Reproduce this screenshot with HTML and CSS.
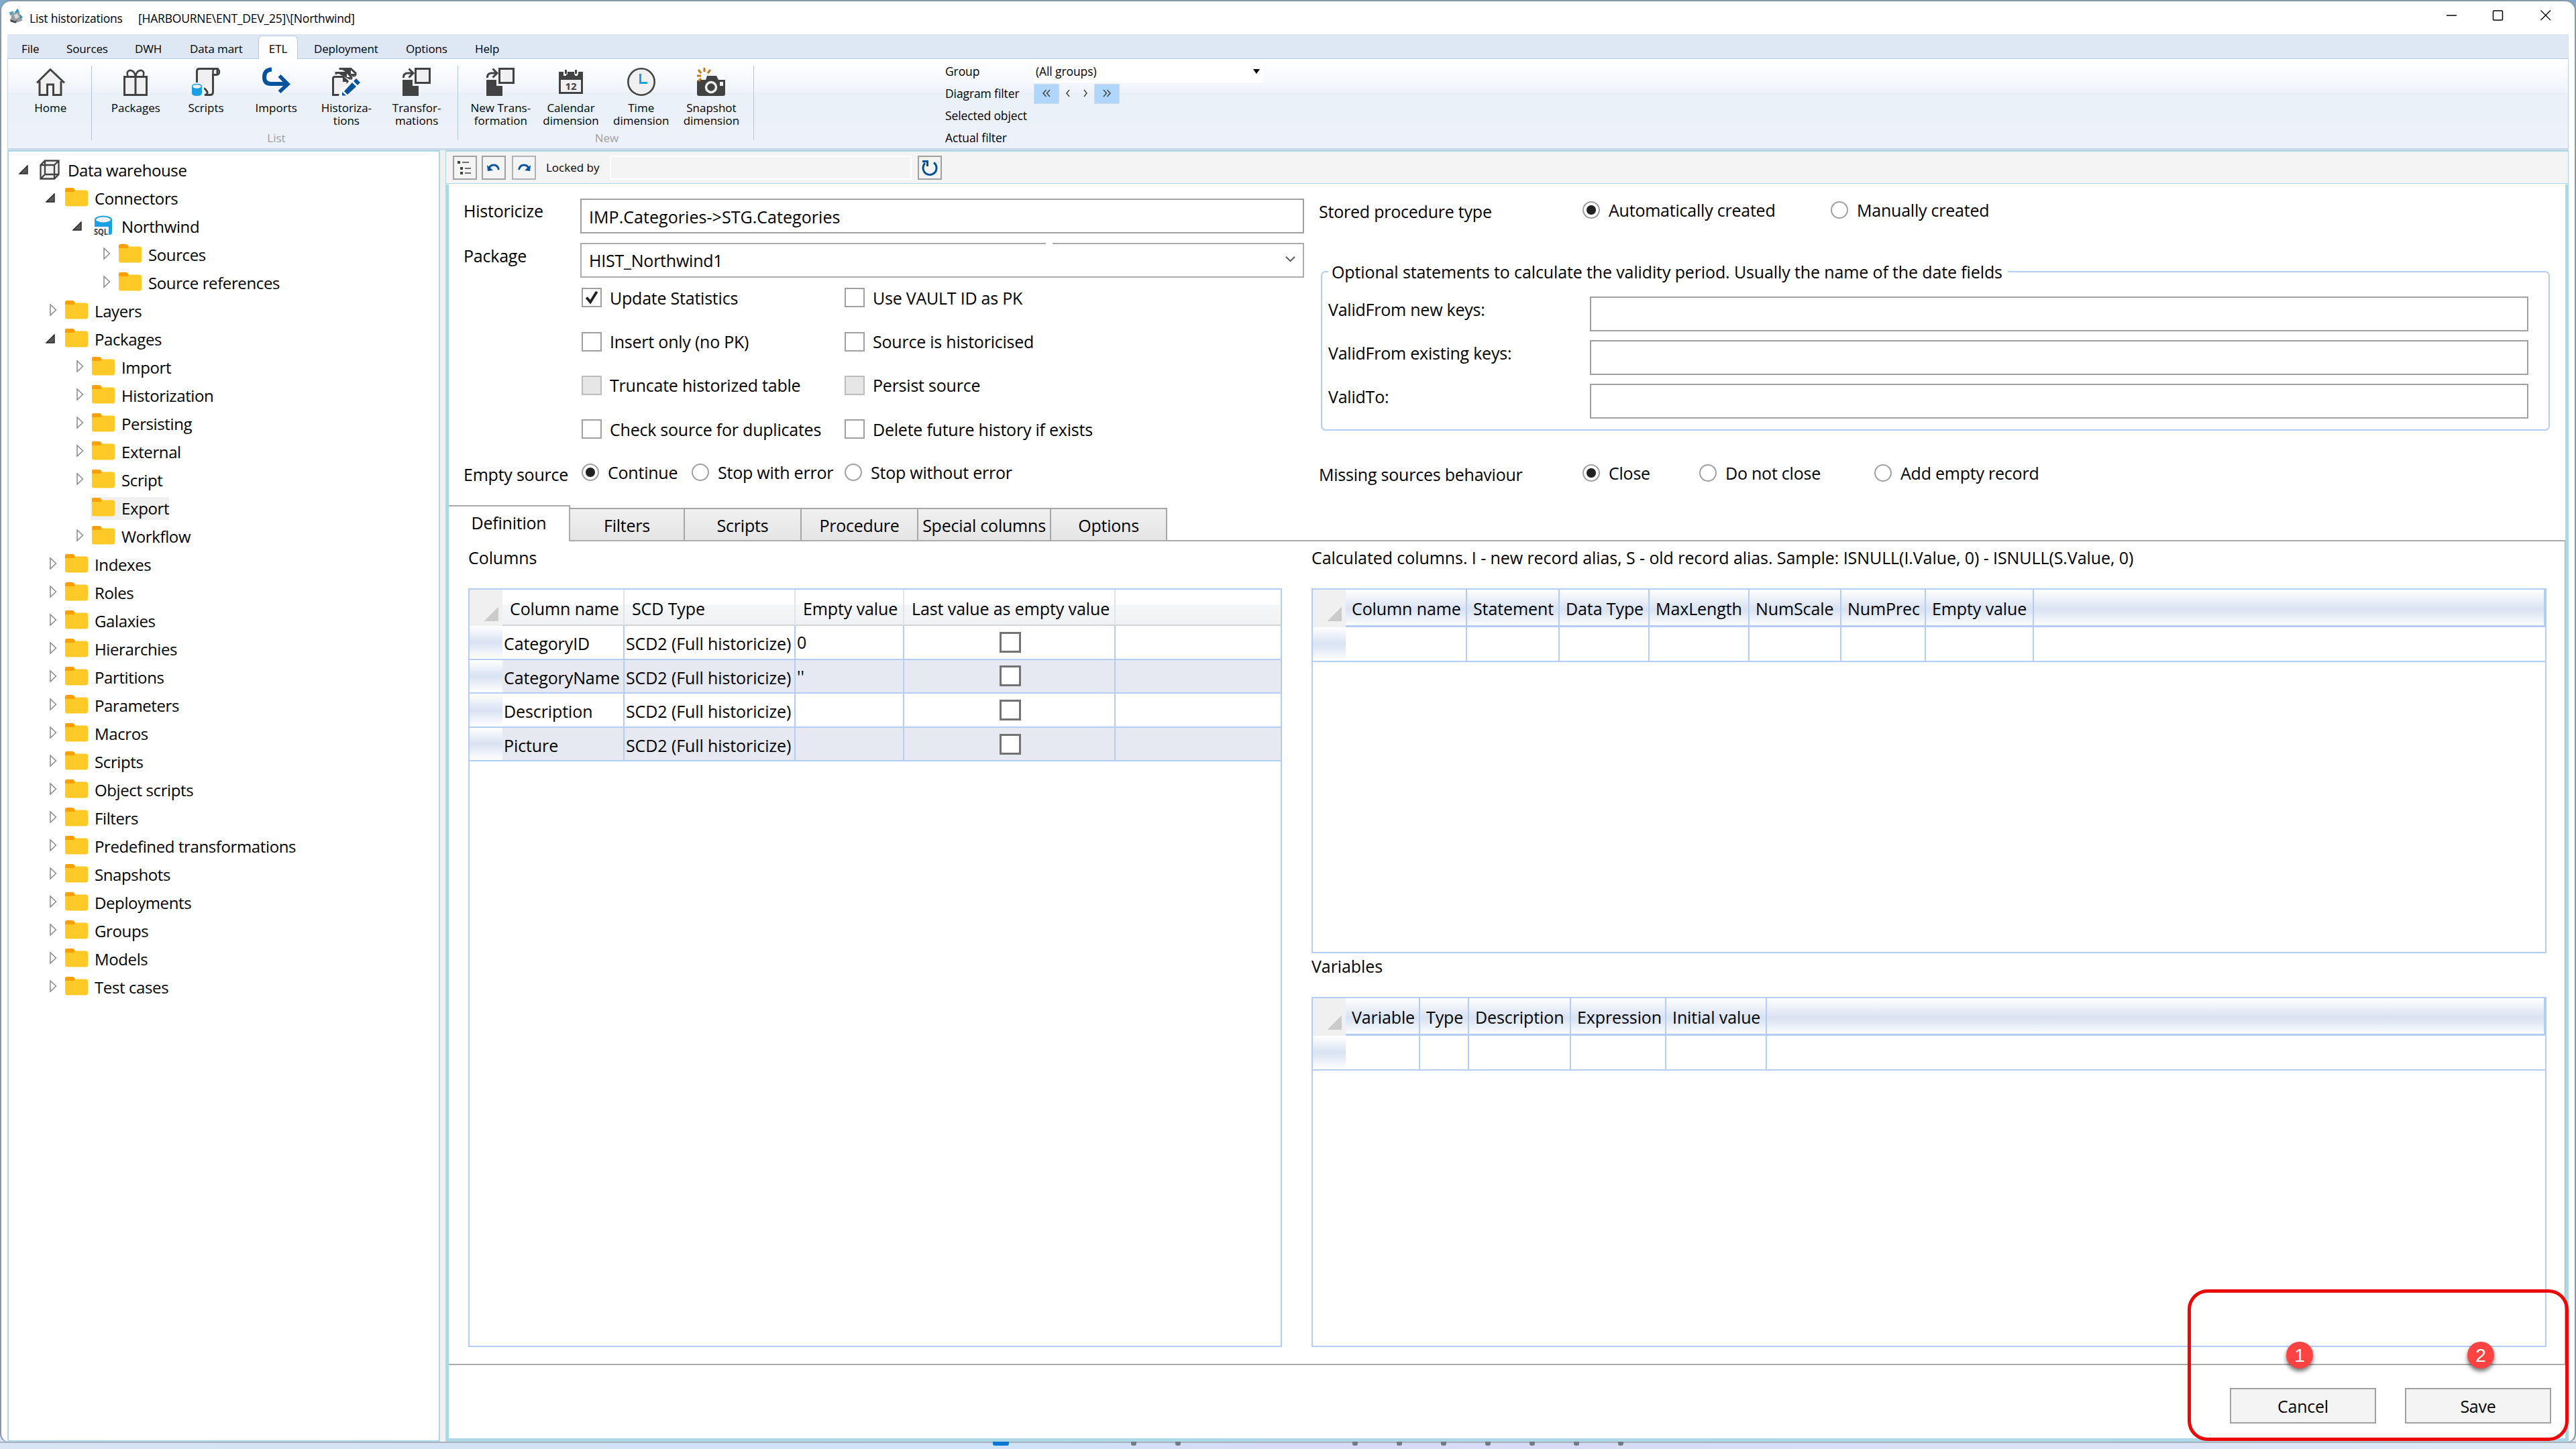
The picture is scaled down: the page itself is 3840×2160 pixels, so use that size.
FILE: index.html
```html
<!DOCTYPE html>
<html lang="en">
<head>
<meta charset="utf-8">
<title>List historizations</title>
<link rel="stylesheet" href="styles.css">
</head>
<body>
<svg width="0" height="0" class="defs">
  <symbol id="folder" viewBox="0 0 34 28"><path d="M0 3Q0 0 3 0H11L15 4H30V12H0Z" fill="#ffa000"/><rect x="0" y="3.5" width="34" height="24" rx="3" fill="#ffca28"/><path d="M0 8V3.5H14L12 6H34V12H0Z" fill="#ffca28"/><path d="M0 6V3Q0 0 3 0H11Q13 0 15 3L13 6Z" fill="#ffa000"/></symbol>
  <symbol id="open" viewBox="0 0 14 14"><path d="M13 1V13H1Z" fill="#595959" stroke="#262626" stroke-width="1.4"/></symbol>
  <symbol id="closed" viewBox="0 0 11 18"><path d="M1 1V17L9.5 9Z" fill="#fff" stroke="#8a8a8a" stroke-width="1.5"/></symbol>
  <symbol id="transform" viewBox="0 0 42 42"><path d="M19.500 1.500H40.500V22.500H19.500Z" fill="#f0eff1" stroke="#424242" stroke-width="3"/><path d="M0 18H15V27H24V42H0Z" fill="#424242"/><path d="M1.500 15V14Q1.500 8 8 8H15M9.500 1.500L16 8L9.500 14.500" fill="none" stroke="#424242" stroke-width="3"/></symbol>
</svg>
<div class="window">
  <header class="titlebar">
    <svg class="app-icon" viewBox="0 0 22 24"><path d="M8 6L13 0L16 7L12 9Z" fill="#2b9cbd"/><path d="M0 6L6 4L6 10L1 11Z" fill="#4fa3bd"/><path d="M6 7L14 6L19 12L20 19L9 23L2 19L3 11Z" fill="#9a9d9f"/><path d="M7 10L12 8L15 13L10 17Z" fill="#d9dcdd"/><path d="M1 17L9 20L12 17L10 23L2 21Z" fill="#414a50"/><path d="M17 9L21 14L17 16Z" fill="#3a8fae"/></svg>
    <span class="t-name">List historizations</span><span>[HARBOURNE\ENT_DEV_25]\[Northwind]</span>
    <svg class="controls" viewBox="0 0 156 16" fill="none" stroke="#000"><path d="M0 8H15" stroke-width="1.300"/><rect x="69.500" y="1" width="14" height="14" rx="1.500" stroke-width="1.500"/><path d="M140.500 .5L155 15M155 .5L140.500 15" stroke-width="1.400"/></svg>
  </header>
  <nav class="menu">
    <span class="m1">File</span><span class="m2">Sources</span><span class="m3">DWH</span><span class="m4">Data mart</span><span class="m5 active">ETL</span><span class="m6">Deployment</span><span class="m7">Options</span><span class="m8">Help</span>
  </nav>
  <section class="ribbon">
    <div class="group home"><div class="items">
      <div class="item"><svg viewBox="0 0 42 42"><path d="M5 21V40.500H16.500V24H25V40.500H37V21L21 4Z" fill="#f0eff1"/><path d="M1 22.500L21 2.500L42 22.500M5 20V40.500H16.500V25H25.500V40.500H37V20" fill="none" stroke="#424242" stroke-width="3"/></svg><span>Home</span></div>
    </div></div>
    <div class="group list"><div class="items">
      <div class="item"><svg viewBox="0 0 42 42"><path d="M4.500 13.500H37.500V40.500H4.500ZM21 13V40" fill="#f0eff1" stroke="#424242" stroke-width="3"/><path d="M21 13Q19 3 12 4Q7 6 9.500 12M21 13Q23 3 30 4Q35 6 32.500 12" fill="none" stroke="#424242" stroke-width="2.600"/></svg><span>Packages</span></div>
      <div class="item"><svg viewBox="0 0 42 42"><path d="M7.500 22V5Q7.500 1.500 11 1.500H38V9Q38 10.500 36 10.500H31.500V36Q31.500 40.500 27 40.500H19Q24 40 23 36Q20 31 18 31" fill="#f0eff1" stroke="#424242" stroke-width="3"/><path d="M31.500 10V5Q31.500 1.500 35 1.500Q41 1.500 41 6Q41 10.500 36 10.500H33" fill="none" stroke="#424242" stroke-width="2.500"/><path d="M0 28H15V38Q15 42 7.500 42Q0 42 0 38Z" fill="#1ba1e2"/><ellipse cx="7.500" cy="28" rx="7" ry="3.500" fill="#f0eff1" stroke="#1ba1e2" stroke-width="1.500"/></svg><span>Scripts</span></div>
      <div class="item"><svg viewBox="0 0 42 42"><path d="M14 2.500Q3 3 3 14Q3 24 13 24H37" fill="none" stroke="#00539c" stroke-width="6"/><path d="M25.500 12L38 24.500L25.500 36" fill="none" stroke="#00539c" stroke-width="5.500"/></svg><span>Imports</span></div>
      <div class="item"><svg viewBox="0 0 42 42"><path d="M12 3V1.500H28L35 8V14M6 10V7.500H23L29 14V18" fill="none" stroke="#424242" stroke-width="3"/><path d="M15 3H28V9H34L33 14ZM10 9H22V14H28L27 18Z" fill="#424242"/><path d="M1.500 40.500V16Q1.500 13.500 4 13.500H16L23 20V25L12 40.500Z" fill="#f0eff1" stroke="#424242" stroke-width="3"/><path d="M16 12L25 21H16Z" fill="#424242"/><path d="M10 42L13 31L38 10L44 18L20 42Z" fill="#f7f7f7"/><path d="M18 35L30 22L36 28L23 40ZM32 20L36 16L42 22L38 26ZM15 36L21 41.500H15Z" fill="#00539c"/></svg><span>Historiza-<br>tions</span></div>
      <div class="item"><svg><use href="#transform"/></svg><span>Transfor-<br>mations</span></div>
    </div><div class="caption">List</div></div>
    <div class="group new"><div class="items">
      <div class="item"><svg><use href="#transform"/></svg><span>New Trans-<br>formation</span></div>
      <div class="item"><svg viewBox="0 0 42 42"><path d="M4.500 16V37.500H37.500V16Z" fill="#f0eff1" stroke="#424242" stroke-width="3"/><path d="M3 6H10V12H14V6H16V6H27V12H31V6H39V18H3Z" fill="#424242"/><path d="M10 2H16V10H10ZM26 2H32V10H26Z" fill="#fafbfc"/><path d="M12 3H15V9H12ZM27 3H30V9H27Z" fill="#424242"/><text x="21" y="33" text-anchor="middle" class="cal">12</text></svg><span>Calendar<br>dimension</span></div>
      <div class="item"><svg viewBox="0 0 42 42"><circle cx="21" cy="21" r="19.700" fill="#f0eff1" stroke="#424242" stroke-width="2.600"/><path d="M19.500 9V22.500H30" fill="none" stroke="#1ba1e2" stroke-width="3"/></svg><span>Time<br>dimension</span></div>
      <div class="item"><svg viewBox="0 0 42 42"><path d="M3 18H13L15 12H29L32 18H42V39Q42 42 39 42H3Q0 42 0 39V21Q0 18 3 18Z" fill="#424242"/><circle cx="21" cy="29" r="7.500" fill="#424242" stroke="#f0eff1" stroke-width="3.500"/><rect x="34" y="21" width="5" height="6" fill="#f0eff1"/><path d="M11 0V6M2 3L6 8M20 3L16 8M0 12H6M2 20L6 16" stroke="#c27d1a" stroke-width="3"/></svg><span>Snapshot<br>dimension</span></div>
    </div><div class="caption">New</div></div>
    <div class="filters">
      <span>Group</span><div class="combo"><span>(All groups)</span><i></i></div>
      <span>Diagram filter</span><div class="nav"><b><svg viewBox="0 0 14 12"><path d="M6.500 1L2 6L6.500 11M12 1L7.500 6L12 11"/></svg></b><em><svg viewBox="0 0 14 12"><path d="M9 1L5 6L9 11"/></svg></em><em><svg viewBox="0 0 14 12"><path d="M5 1L9 6L5 11"/></svg></em><b><svg viewBox="0 0 14 12"><path d="M2 1L6.500 6L2 11M7.500 1L12 6L7.500 11"/></svg></b></div>
      <span>Selected object</span><span></span>
      <span>Actual filter</span><span></span>
    </div>
  </section>
  <main class="body">
    <aside class="tree">
      <div class="row l0"><svg class="ar"><use href="#open"/></svg><svg class="cube" viewBox="0 0 30 30"><path d="M1.500 8L8 1.500H28.500V22L22 28.500H1.500Z" fill="#f0eff1"/><path d="M1.500 8L8 1.500H28.500V22L22 28.500H1.500ZM1.500 8H22V28.500M22 8L28.500 1.500M8 2V22H28M8 22L2 28" fill="none" stroke="#424242" stroke-width="2.300"/></svg><span>Data warehouse</span></div>
      <div class="row l1"><svg class="ar"><use href="#open"/></svg><svg class="fo"><use href="#folder"/></svg><span>Connectors</span></div>
      <div class="row l2"><svg class="ar"><use href="#open"/></svg><svg class="db" viewBox="0 0 34 32"><path d="M4 6V24Q8 30 17 29H27Q30 28 30 25V6Z" fill="#1ba1e2"/><ellipse cx="17" cy="6.500" rx="12" ry="5" fill="#f0eff1" stroke="#1ba1e2" stroke-width="2"/><path d="M2 17H25V31H2Z" fill="#f7f7f7"/><text x="3" y="29" textLength="21" lengthAdjust="spacingAndGlyphs" class="sql">SQL</text></svg><span>Northwind</span></div>
      <div class="row l3"><svg class="ac"><use href="#closed"/></svg><svg class="fo"><use href="#folder"/></svg><span>Sources</span></div>
      <div class="row l3"><svg class="ac"><use href="#closed"/></svg><svg class="fo"><use href="#folder"/></svg><span>Source references</span></div>
      <div class="row l1"><svg class="ac"><use href="#closed"/></svg><svg class="fo"><use href="#folder"/></svg><span>Layers</span></div>
      <div class="row l1"><svg class="ar"><use href="#open"/></svg><svg class="fo"><use href="#folder"/></svg><span>Packages</span></div>
      <div class="row l2"><svg class="ac"><use href="#closed"/></svg><svg class="fo"><use href="#folder"/></svg><span>Import</span></div>
      <div class="row l2"><svg class="ac"><use href="#closed"/></svg><svg class="fo"><use href="#folder"/></svg><span>Historization</span></div>
      <div class="row l2"><svg class="ac"><use href="#closed"/></svg><svg class="fo"><use href="#folder"/></svg><span>Persisting</span></div>
      <div class="row l2"><svg class="ac"><use href="#closed"/></svg><svg class="fo"><use href="#folder"/></svg><span>External</span></div>
      <div class="row l2"><svg class="ac"><use href="#closed"/></svg><svg class="fo"><use href="#folder"/></svg><span>Script</span></div>
      <div class="row l2"><svg class="ac"></svg><div class="selected"><svg class="fo"><use href="#folder"/></svg><span>Export</span></div></div>
      <div class="row l2"><svg class="ac"><use href="#closed"/></svg><svg class="fo"><use href="#folder"/></svg><span>Workflow</span></div>
      <div class="row l1"><svg class="ac"><use href="#closed"/></svg><svg class="fo"><use href="#folder"/></svg><span>Indexes</span></div>
      <div class="row l1"><svg class="ac"><use href="#closed"/></svg><svg class="fo"><use href="#folder"/></svg><span>Roles</span></div>
      <div class="row l1"><svg class="ac"><use href="#closed"/></svg><svg class="fo"><use href="#folder"/></svg><span>Galaxies</span></div>
      <div class="row l1"><svg class="ac"><use href="#closed"/></svg><svg class="fo"><use href="#folder"/></svg><span>Hierarchies</span></div>
      <div class="row l1"><svg class="ac"><use href="#closed"/></svg><svg class="fo"><use href="#folder"/></svg><span>Partitions</span></div>
      <div class="row l1"><svg class="ac"><use href="#closed"/></svg><svg class="fo"><use href="#folder"/></svg><span>Parameters</span></div>
      <div class="row l1"><svg class="ac"><use href="#closed"/></svg><svg class="fo"><use href="#folder"/></svg><span>Macros</span></div>
      <div class="row l1"><svg class="ac"><use href="#closed"/></svg><svg class="fo"><use href="#folder"/></svg><span>Scripts</span></div>
      <div class="row l1"><svg class="ac"><use href="#closed"/></svg><svg class="fo"><use href="#folder"/></svg><span>Object scripts</span></div>
      <div class="row l1"><svg class="ac"><use href="#closed"/></svg><svg class="fo"><use href="#folder"/></svg><span>Filters</span></div>
      <div class="row l1"><svg class="ac"><use href="#closed"/></svg><svg class="fo"><use href="#folder"/></svg><span>Predefined transformations</span></div>
      <div class="row l1"><svg class="ac"><use href="#closed"/></svg><svg class="fo"><use href="#folder"/></svg><span>Snapshots</span></div>
      <div class="row l1"><svg class="ac"><use href="#closed"/></svg><svg class="fo"><use href="#folder"/></svg><span>Deployments</span></div>
      <div class="row l1"><svg class="ac"><use href="#closed"/></svg><svg class="fo"><use href="#folder"/></svg><span>Groups</span></div>
      <div class="row l1"><svg class="ac"><use href="#closed"/></svg><svg class="fo"><use href="#folder"/></svg><span>Models</span></div>
      <div class="row l1"><svg class="ac"><use href="#closed"/></svg><svg class="fo"><use href="#folder"/></svg><span>Test cases</span></div>
    </aside>
    <section class="editor">
      <div class="toolbar">
        <div class="tb"><svg viewBox="0 0 32 32"><path d="M5 6H9V10H5ZM9 15H13V19H9ZM9 22H13V26H9Z" fill="#424242"/><path d="M12 8H22M16 17H25M16 24H25" stroke="#424242" stroke-width="1.600"/></svg></div>
        <div class="tb undo"><svg viewBox="0 0 32 32"><path d="M8 19Q10 12 16 12Q22 12 23.500 19" fill="none" stroke="#00539c" stroke-width="2.800"/><path d="M6 12L7 21L15 20Z" fill="#00539c"/></svg></div>
        <div class="tb redo"><svg viewBox="0 0 32 32"><path d="M24 19Q22 12 16 12Q10 12 8.500 19" fill="none" stroke="#00539c" stroke-width="2.800"/><path d="M26 12L25 21L17 20Z" fill="#00539c"/></svg></div>
        <span>Locked by</span><div class="lockfield"></div>
        <div class="tb"><svg viewBox="0 0 32 32"><path d="M9 9Q6 12 6 16.500A10 10 0 1 0 22 8.500" fill="none" stroke="#00539c" stroke-width="3"/><path d="M5 6.500H12.500V14" fill="none" stroke="#00539c" stroke-width="3"/></svg></div>
      </div>
      <div class="content">
        <div class="form">
          <div class="left">
            <div class="frow r1"><label>Historicize</label><div class="input">IMP.Categories-&gt;STG.Categories</div></div>
            <div class="frow r2"><label>Package</label><div class="input select">HIST_Northwind1<svg viewBox="0 0 16 10"><path d="M1 1.500L8 8.500L15 1.500" fill="none" stroke="#555" stroke-width="2"/></svg></div></div>
            <div class="checks">
              <div class="check"><i><svg viewBox="0 0 26 26"><path d="M5 13L11 20L21 4" fill="none" stroke="#212121" stroke-width="4"/></svg></i>Update Statistics</div><div class="check"><i></i>Use VAULT ID as PK</div>
              <div class="check"><i></i>Insert only (no PK)</div><div class="check"><i></i>Source is historicised</div>
              <div class="check off"><i></i>Truncate historized table</div><div class="check off"><i></i>Persist source</div>
              <div class="check"><i></i>Check source for duplicates</div><div class="check"><i></i>Delete future history if exists</div>
            </div>
            <div class="radios empty"><label>Empty source</label><div class="radio on e1"><i></i>Continue</div><div class="radio e2"><i></i>Stop with error</div><div class="radio"><i></i>Stop without error</div></div>
          </div>
          <div class="right">
            <div class="radios stored"><label>Stored procedure type</label><div class="radio on s1"><i></i>Automatically created</div><div class="radio"><i></i>Manually created</div></div>
            <fieldset>
              <legend>Optional statements to calculate the validity period. Usually the name of the date fields</legend>
              <div class="vrow"><label>ValidFrom new keys:</label><div class="input"></div></div>
              <div class="vrow"><label>ValidFrom existing keys:</label><div class="input"></div></div>
              <div class="vrow"><label>ValidTo:</label><div class="input"></div></div>
            </fieldset>
            <div class="radios missing"><label>Missing sources behaviour</label><div class="radio on c1"><i></i>Close</div><div class="radio c2"><i></i>Do not close</div><div class="radio"><i></i>Add empty record</div></div>
          </div>
        </div>
        <div class="tabs"><div class="tab sel">Definition</div><div class="tab w171">Filters</div><div class="tab w174">Scripts</div><div class="tab w174">Procedure</div><div class="tab w198">Special columns</div><div class="tab w173">Options</div></div>
        <div class="page">
          <div class="pcol pleft">
            <div class="ptitle">Columns</div>
            <div class="grid main">
              <div class="gr head"><div class="corner"></div><div>Column name</div><div>SCD Type</div><div>Empty value</div><div>Last value as empty value</div><div></div></div>
              <div class="gr"><div class="rh"></div><div>CategoryID</div><div>SCD2 (Full historicize)</div><div class="raise">0</div><div class="cb"><i></i></div><div></div></div>
              <div class="gr alt"><div class="rh"></div><div>CategoryName</div><div>SCD2 (Full historicize)</div><div class="raise">''</div><div class="cb"><i></i></div><div></div></div>
              <div class="gr"><div class="rh"></div><div>Description</div><div>SCD2 (Full historicize)</div><div></div><div class="cb"><i></i></div><div></div></div>
              <div class="gr alt"><div class="rh"></div><div>Picture</div><div>SCD2 (Full historicize)</div><div></div><div class="cb"><i></i></div><div></div></div>
            </div>
          </div>
          <div class="pcol pright">
            <div class="ptitle">Calculated columns. I - new record alias, S - old record alias. Sample: ISNULL(I.Value, 0) - ISNULL(S.Value, 0)</div>
            <div class="grid blue calc">
              <div class="gr head"><div class="corner"></div><div>Column name</div><div>Statement</div><div>Data Type</div><div>MaxLength</div><div>NumScale</div><div>NumPrec</div><div>Empty value</div><div></div></div>
              <div class="gr"><div class="rh"></div><div></div><div></div><div></div><div></div><div></div><div></div><div></div><div></div></div>
            </div>
            <div class="ptitle vt">Variables</div>
            <div class="grid blue vars">
              <div class="gr head"><div class="corner"></div><div>Variable</div><div>Type</div><div>Description</div><div>Expression</div><div>Initial value</div><div></div></div>
              <div class="gr"><div class="rh"></div><div></div><div></div><div></div><div></div><div></div><div></div></div>
            </div>
          </div>
        </div>
        <footer class="actions"><div class="button">Cancel</div><div class="button">Save</div></footer>
      </div>
    </section>
  </main>
</div>
<div class="taskbar"><i class="cur"></i><i class="d1"></i><i class="d2"></i><i class="d3"></i><i class="d4"></i><i class="d4"></i><i class="d4"></i><i class="d4"></i><i class="d4"></i><i class="d4"></i></div>
<div class="callout"></div>
<div class="badge b1">1</div>
<div class="badge b2">2</div>
</body>
</html>
```
FILE: styles.css
```css
* { box-sizing: border-box; }
html, body { margin: 0; width: 3840px; height: 2160px; overflow: hidden; }
body {
  position: relative; background: linear-gradient(#7fa9c9, #d9e5f4);
  font-family: "Open Sans", "Noto Sans", sans-serif; font-size: 24px; line-height: 32px;
  color: #000; white-space: nowrap;
}
.defs { position: absolute; }
svg { display: block; flex: none; overflow: visible; }
i, em { font-style: normal; display: block; flex: none; }

.window {
  height: 2151px; border: 2px solid #8699aa; border-bottom-color: #aab1bd; border-radius: 16px 16px 14px 14px;
  background: #fff; display: flex; flex-direction: column; overflow: hidden; padding: 0 9px;
}
.titlebar { height: 49px; display: flex; align-items: center; font-size: 17.500px; letter-spacing: -0.012em; padding-left: 3px; flex: none; }
.app-icon { width: 21px; height: 24px; margin-right: 9px; margin-bottom: 5px; }
.t-name { width: 162px; }
.controls { width: 156px; height: 16px; margin-left: auto; margin-right: 26px; margin-bottom: 8px; }

.menu { height: 37px; flex: none; display: flex; background: #dee8f5; border-bottom: 1px solid #b9c9e0; font-size: 17px; letter-spacing: -0.008em; line-height: 40px; padding-top: 2px; padding-left: 21px; }
.m1 { width: 67px; } .m2 { width: 102px; } .m3 { width: 82px; } .m4 { width: 102px; }
.m5 { width: 59px; text-align: center; border: 1px solid #b9c9e0; border-bottom: 0; border-radius: 6px 6px 0 0; background: #fcfdfe; height: 35px; line-height: 38px; }
.m6 { padding-left: 24px; width: 161px; } .m7 { width: 103px; }

.ribbon {
  height: 136px; flex: none; display: flex; font-size: 17px; line-height: 19px;
  background: linear-gradient(#fff 0, #f0f4fa 37%, #eaf1f9 38%, #ebf1f9 72%, #edf1fa 73%);
  border: 1px solid #c3d0e3; border-top: 0; border-bottom: 3px solid #cbd9ea;
}
.group { margin: 10px 0 12px; border-right: 1px solid #b4c5dc; display: flex; flex-direction: column; justify-content: space-between; }
.items { display: flex; }
.item { width: 104.700px; text-align: center; display: flex; flex-direction: column; align-items: center; padding-top: 2px; }
.item svg { width: 42px; height: 44px; margin-bottom: 7px; }
.home { width: 125px; padding-left: 11px; }
.list { width: 546px; padding-left: 13px; }
.new { width: 441px; padding-left: 11px; }
.caption { text-align: center; color: #a0a0a0; line-height: 19px; margin-bottom: -6px; padding-right: 8px; }
.cal { font: bold 15px "Open Sans", sans-serif; fill: #424242; }
.filters { margin-left: 285px; display: grid; grid-template-columns: 132px 342px; grid-auto-rows: 33px; align-items: center; padding-top: 2px; height: 133px; font-size: 17.500px; letter-spacing: -0.006em; }
.combo { background: #fff; height: 32px; display: flex; align-items: center; justify-content: space-between; padding: 0 5px 0 3px; }
.combo i { border: 5px solid transparent; border-top: 7px solid #000; border-bottom: 0; }
.nav { display: flex; align-items: center; }
.nav b { width: 38px; height: 30px; background: #b1d6fb; border: 1px solid #cfdcec; display: flex; align-items: center; justify-content: center; }
.nav em { width: 26px; display: flex; justify-content: center; }
.nav svg { width: 14px; height: 12px; margin-bottom: 1px; fill: none; stroke: #424242; stroke-width: 1.500px; }

.body { flex: 1; display: flex; gap: 8px; background: #f0f0f0; min-height: 0; }
.tree { width: 645px; background: #fff; border: 2px solid #add8e6; padding-top: 7px; letter-spacing: -0.016em; }
.row { height: 42px; display: flex; align-items: center; }
.l0 { padding-left: 15px; } .l1 { padding-left: 55px; } .l2 { padding-left: 95px; } .l3 { padding-left: 135px; }
.ar { width: 14px; height: 14px; margin: 0 15px 2px 0; }
.ac { width: 11px; height: 18px; margin: 0 12px 4px 6px; }
.fo { width: 34px; height: 28px; margin: 0 10px 5px 0; }
.cube { width: 30px; height: 30px; margin: 0 12px 2px 2px; }
.db { width: 34px; height: 32px; margin: 0 10px 2px 0; }
.sql { font: bold 13px "Open Sans", sans-serif; fill: #424242; letter-spacing: 0; }
.selected { background: #f0f0f0; height: 34px; display: flex; align-items: center; margin-left: -2px; padding-left: 2px; }

.editor { flex: 1; display: flex; flex-direction: column; border: 1px solid #add8e6; border-top-width: 2px; background: #fff; }
.toolbar { height: 48px; flex: none; background: #f4f4f4; border-bottom: 1px solid #add8e6; display: flex; align-items: center; padding-left: 10px; font-size: 17px; margin-bottom: 1px; }
.tb { width: 36px; height: 36px; border: 2px solid #a0a0a0; background: #f4f4f4; margin-right: 7px; }
.tb svg { width: 32px; height: 32px; }
.undo { margin-right: 9px; }
.redo { border-color: #aeb2b5; margin-right: 15px; }
.toolbar span { width: 95px; }
.lockfield { width: 450px; height: 36px; border: 2px solid #fff; margin-right: 9px; }
.content { flex: 1; border: 4px solid #add8e6; border-top: 0; display: flex; flex-direction: column; font-size: 25px; letter-spacing: -0.009em; }

.form { height: 478px; flex: none; display: flex; padding-left: 22px; }
.left { width: 1275px; padding-top: 21px; }
.frow { display: flex; height: 52px; margin-bottom: 14px; }
.frow label { width: 174px; line-height: 37px; }
.r2 { margin-bottom: -3px; }
.r2 label { line-height: 38px; }
.input { width: 1079px; height: 52px; border: 2px solid #a0a0a0; background: #fff; padding-left: 11px; line-height: 51px; }
.r1 .input { letter-spacing: 0.002em; }
.select { border-color: #acacac; display: flex; justify-content: space-between; align-items: center; padding-right: 11px; position: relative; }
.select::after { content: ""; position: absolute; left: 692px; top: -2px; width: 10px; height: 2px; background: #fff; }
.select svg { width: 15px; height: 10px; margin-bottom: 4px; }
.checks { display: grid; grid-template-columns: 392px 600px; grid-auto-rows: 65.400px; padding-left: 176px; }
.check { display: flex; align-items: center; }
.check i { width: 30px; height: 29px; border: 2px solid #a0a0a0; margin-right: 12px; }
.check svg { width: 26px; height: 25px; }
.off i { background: #e6e6e6; border-color: #bcbcbc; }
.radios { display: flex; align-items: center; height: 52px; }
.radio { display: flex; align-items: center; }
.radio i { width: 26px; height: 26px; border: 2px solid #a0a0a0; border-radius: 50%; margin-right: 13px; }
.on i { background: radial-gradient(circle, #212121 6.500px, #fff 7.500px); }
.empty { margin-top: 5px; }
.empty label { width: 176px; padding-top: 6px; }
.e1 { width: 164px; } .e2 { width: 228px; }
.right { padding-top: 12px; }
.stored label, .missing label { width: 393px; padding-top: 4px; }
.s1 { width: 370px; } .c1 { width: 174px; } .c2 { width: 261px; }
fieldset { margin: 48px 0 0 3px; width: 1832px; height: 255px; border: 2px solid #b4cdf5; border-radius: 7px; padding: 19px 9px 0; }
legend { padding: 0 8px 0 5px; line-height: 36px; letter-spacing: -0.005em; }
.vrow { display: flex; margin-bottom: 13px; }
.vrow label { width: 390px; line-height: 39px; }
.vrow .input { width: 1399px; }
.missing { margin-top: 37px; }

.tabs { height: 54px; display: flex; align-items: flex-end; flex: none; border-bottom: 2px solid #acacac; }
.tab { height: 48px; line-height: 48px; text-align: center; background: linear-gradient(#f0f0f0, #e5e5e5); border: 2px solid #a6a6a6; border-left: 0; border-bottom: 0; }
.sel { width: 181px; height: 54px; background: #fff; line-height: 48px; border-color: #acacac; margin-bottom: -2px; }
.w171 { width: 171px; } .w173 { width: 173px; } .w174 { width: 174px; } .w198 { width: 198px; }
.page { flex: 1; display: flex; gap: 44px; padding: 8px 27px 0 29px; border-right: 1px solid #acacac; border-bottom: 2px solid #acacac; letter-spacing: -0.004em; }
.ptitle { line-height: 32px; margin-bottom: 30px; letter-spacing: -0.003em; }
.grid { border: 2px solid #b4cdf5; }
.pleft { width: 1213px; }
.pright { flex: 1; }
.main { height: 1131px; }
.calc { height: 544px; }
.vars { height: 522px; }
.vt { margin: 3px 0 30px; }
.gr { display: grid; height: 50.600px; border-bottom: 2px solid #b4cdf5; line-height: 52px; }
.main .gr { grid-template-columns: 49px 182px 255px 162px 315px 1fr; }
.calc .gr { grid-template-columns: 49px 181px 138px 134px 149px 137px 126px 161px 1fr; }
.vars .gr { grid-template-columns: 49px 111px 73px 152px 142px 150px 1fr; }
.gr > div { border-right: 2px solid #b4cdf5; padding-left: 2px; overflow: hidden; }
.gr > div:last-child, .gr > div:first-child { border-right: 0; }
.alt { background: #e6e9f1; }
.raise { line-height: 48px; }
.gr.head { height: 54px; border-bottom: 0; line-height: 57px; background: linear-gradient(#fff 40%, #f5f6f8 42%, #f0f1f2); }
.head > div { padding-left: 11px; border-right: 2px solid #e2e4e7; border-bottom: 2px solid #d2d3d5; }
.blue .gr.head { height: 56px; background: linear-gradient(#fff, #d9e2f2 52%, #fff); }
.blue .head > div { border-right: 2px solid #b4cdf5; border-bottom: 3px solid #b4cdf5; padding-left: 9px; }
.blue .gr { height: 52px; }
.gr > .corner, .blue .gr > .corner { border-color: #f0f0f0; background: linear-gradient(to bottom right, transparent 50%, #cbcbcb 51%) 21px 25px / 22px 22px no-repeat #f0f0f0; }
.rh { background: linear-gradient(#fff, #d9e2f2 50%, #fff); }
.cb { display: flex; align-items: center; justify-content: center; }
.cb i { width: 32px; height: 31px; border: 3px solid #737373; background: #fff; }

.actions { height: 109px; flex: none; display: flex; justify-content: flex-end; gap: 43px; padding: 34px 21px 0 0; }
.button { width: 218px; height: 53px; border: 2px solid #a0a0a0; background: #f4f4f4; text-align: center; line-height: 50px; }

.taskbar { height: 11px; position: relative; display: flex; padding-left: 1480px; margin-top: -2px; background: linear-gradient(90deg, #d6e4f3, #cfe2f8 40%, #d6dcf3 50%, #d5ddf5 65%, #dfeaf7); border-top: 2px solid #aab1bd; }
.taskbar i { width: 8px; height: 6px; background: #747a86; border-radius: 0 0 3px 3px; margin-top: -2px; }
.taskbar .cur { width: 24px; background: #0c78d4; }
.taskbar .d1 { margin-left: 182px; } .taskbar .d2 { margin-left: 58px; } .taskbar .d3 { margin-left: 256px; } .taskbar .d4 { margin-left: 58px; }

.callout { position: absolute; left: 3261px; top: 1922px; width: 568px; height: 226px; border: 5px solid #ed0707; border-radius: 30px; }
.badge { position: absolute; top: 2000px; width: 40px; height: 40px; border-radius: 50%; background: #ff4343; color: #fff; text-align: center; font: 28px/41px "Liberation Sans", sans-serif; letter-spacing: 0; box-shadow: 0 4px 6px rgba(0, 0, 0, .55); }
.b1 { left: 3408px; } .b2 { left: 3678px; }
```
